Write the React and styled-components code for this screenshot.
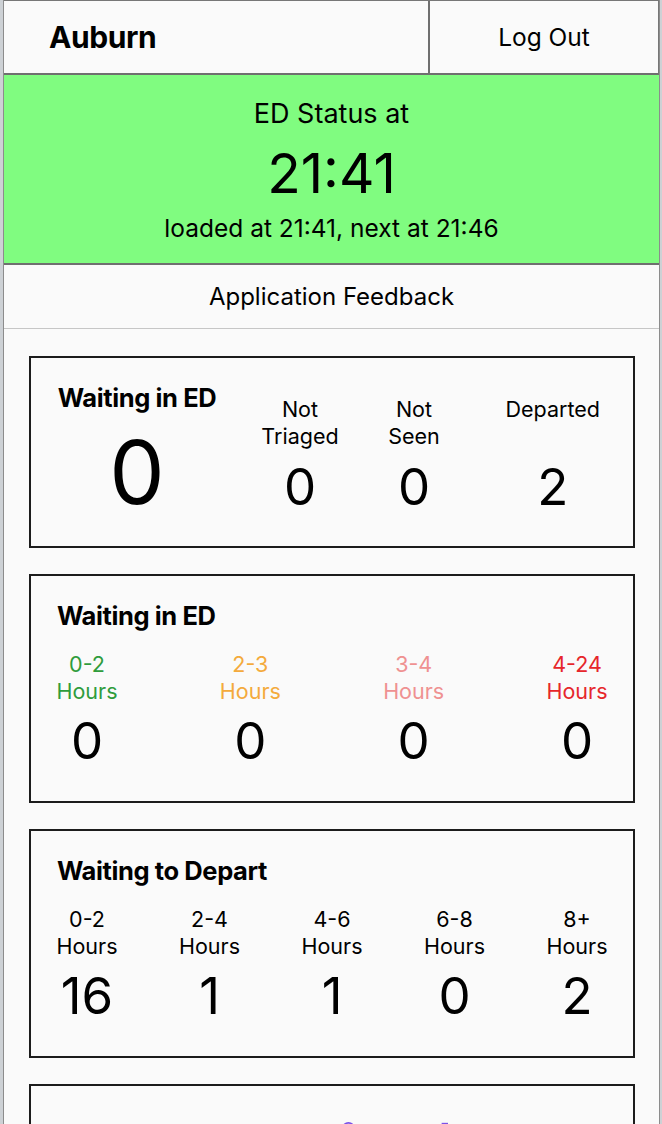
import React from 'react'
import styled, { createGlobalStyle } from 'styled-components'

const Global = createGlobalStyle`
body{
    margin: 0;
    background-color: #cdd1d5;
    font-family: 'Inter', 'Noto Sans', sans-serif;
    color: #000;
}
`

const Shell = styled.div`
margin: 0 2px 0 3px;
min-height: 100vh;
background-color: #fafafa;
border-left: 1px solid #8c8c8c;
border-right: 1px solid #8c8c8c;
overflow: hidden;
`

const Header = styled.header`
display: grid;
grid-template-columns: 426px 1fr;
height: 72px;
border-top: 1px solid #777;
border-bottom: 2px solid #6f6f6f;
border-right: 1px solid #777;
`
const Site = styled.div`
display: flex;
align-items: center;
padding-left: 45px;
font-size: 30px;
font-weight: 700;
letter-spacing: -0.4px;
border-right: 2px solid #6f6f6f;
`
const LogOut = styled.button`
border: none;
background: none;
font-family: inherit;
font-size: 24.5px;
color: #000;
padding: 0;
`

const Status = styled.section`
height: 164px;
padding-top: 24px;
background-color: #80fc80;
border-bottom: 2px solid #6f6f6f;
display: flex;
flex-direction: column;
align-items: center;
`
const StatusLabel = styled.div`
font-size: 27px;
line-height: 30px;
`
const StatusTime = styled.div`
font-size: 55px;
line-height: 64px;
margin-top: 12px;
`
const StatusNext = styled.div`
font-size: 24.5px;
line-height: 30px;
margin-top: 8px;
`

const Feedback = styled.div`
height: 63px;
display: flex;
align-items: center;
justify-content: center;
font-size: 24px;
border-bottom: 1px solid #c6c6c6;
`

const Cards = styled.main`
padding: 27px 24px 0 25px;
display: flex;
flex-direction: column;
gap: 26px;
`
const Card = styled.section`
border: 2px solid #1c1c1c;
padding: ${p => p.$pad || '26px 26px 32px 26px'};
min-height: ${p => p.$minH || 'auto'};
`
const Title = styled.h2`
margin: 0;
font-size: 25.5px;
line-height: 28px;
font-weight: 700;
letter-spacing: -0.4px;
white-space: nowrap;
`

const Summary = styled.div`
display: grid;
grid-template-columns: 160px 166px 62px 1fr;
align-items: start;
`
const Main = styled.div`
display: flex;
flex-direction: column;
align-items: center;
`
const BigNum = styled.div`
font-size: 88px;
line-height: 92px;
margin-top: 14px;
`
const Stat = styled.div`
display: flex;
flex-direction: column;
align-items: center;
padding-top: 12px;
justify-self: ${p => p.$end ? 'end' : 'center'};
`
const Label = styled.div`
font-size: 21.5px;
line-height: 27px;
text-align: center;
min-height: 54px;
white-space: nowrap;
color: ${p => p.$color || '#000'};
`
const Num = styled.div`
font-size: 51px;
line-height: 56px;
margin-top: ${p => p.$mt || '0'};
`

const Bands = styled.div`
display: flex;
justify-content: space-between;
margin-top: 21px;
`
const Band = styled.div`
display: flex;
flex-direction: column;
align-items: center;
width: 60px;
`

const Chart = styled.svg`
display: block;
width: 100%;
height: 60px;
`

const waiting = [
    { range: '0-2', color: '#2f9c3c', value: 0 },
    { range: '2-3', color: '#f4aa3c', value: 0 },
    { range: '3-4', color: '#ef9191', value: 0 },
    { range: '4-24', color: '#e6262b', value: 0 },
]

const depart = [
    { range: '0-2', value: 16 },
    { range: '2-4', value: 1 },
    { range: '4-6', value: 1 },
    { range: '6-8', value: 0 },
    { range: '8+', value: 2 },
]

const App = () => {
    return (
        <Shell>
            <Global />
            <Header>
                <Site>Auburn</Site>
                <LogOut>Log Out</LogOut>
            </Header>
            <Status>
                <StatusLabel>ED Status at</StatusLabel>
                <StatusTime>21:41</StatusTime>
                <StatusNext>loaded at 21:41, next at 21:46</StatusNext>
            </Status>
            <Feedback>Application Feedback</Feedback>
            <Cards>
                <Card $pad="26px 33px 28px 26px">
                    <Summary>
                        <Main>
                            <Title>Waiting in ED</Title>
                            <BigNum>0</BigNum>
                        </Main>
                        <Stat>
                            <Label>Not<br />Triaged</Label>
                            <Num $mt="9px">0</Num>
                        </Stat>
                        <Stat>
                            <Label>Not<br />Seen</Label>
                            <Num $mt="9px">0</Num>
                        </Stat>
                        <Stat $end>
                            <Label>Departed</Label>
                            <Num $mt="9px">2</Num>
                        </Stat>
                    </Summary>
                </Card>
                <Card>
                    <Title>Waiting in ED</Title>
                    <Bands>
                        {waiting.map(w => (
                            <Band key={w.range}>
                                <Label $color={w.color}>{w.range}<br />Hours</Label>
                                <Num $mt="8px">{w.value}</Num>
                            </Band>
                        ))}
                    </Bands>
                </Card>
                <Card>
                    <Title>Waiting to Depart</Title>
                    <Bands>
                        {depart.map(d => (
                            <Band key={d.range}>
                                <Label>{d.range}<br />Hours</Label>
                                <Num $mt="8px">{d.value}</Num>
                            </Band>
                        ))}
                    </Bands>
                </Card>
                <Card $pad="26px" $minH="200px">
                    <Chart viewBox="0 0 602 60">
                        <circle cx="319" cy="15" r="6" fill="none" stroke="#7b52e8" strokeWidth="2" />
                        <line x1="421" y1="10" x2="428" y2="10" stroke="#7b52e8" strokeWidth="2" />
                    </Chart>
                </Card>
            </Cards>
        </Shell>
    )
}

export default App
